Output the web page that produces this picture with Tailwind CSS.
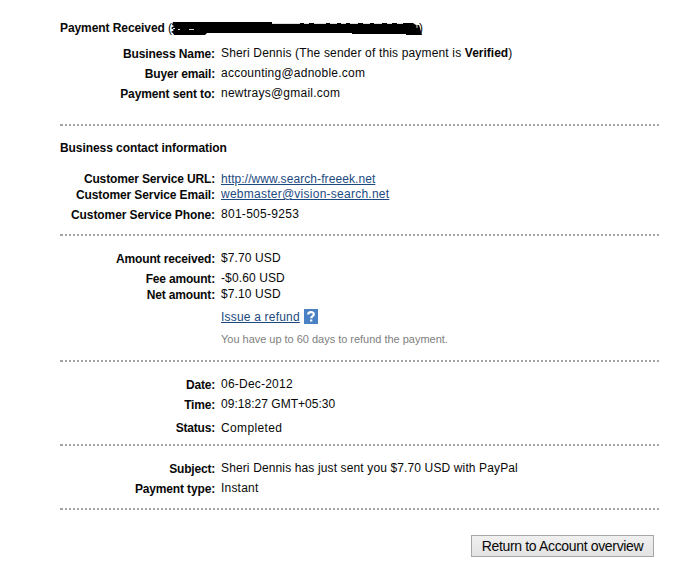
<!DOCTYPE html>
<html lang="en">
<head>
  <meta charset="UTF-8" />
  <meta name="viewport" content="width=device-width, initial-scale=1.0"/>
  <title>Transaction Details</title>
  <script src="https://cdn.jsdelivr.net/npm/@tailwindcss/browser@4"></script>
</head>
<body class="bg-white h-[566px] overflow-hidden font-['Liberation_Sans',Arial,sans-serif] text-[12px] leading-[20px] text-[#080808]">

  <main class="ml-[60px] w-[600px] pt-[18px]">

    <!-- PAYMENT -->
    <section class="h-[106px]">
      <h1 class="relative whitespace-nowrap"><b class="tracking-[-0.08px]">Payment Received</b> (
        <svg class="absolute left-[108px] top-[2px]" width="256" height="17" viewBox="0 0 256 17">
          <path d="M5 2H104V3H245L248 5L251 5L252 8L254 15H238V14H184V13H39L37 15H6L5 13L3 12L6 10L3 8L6 6L4 5Z" fill="#000"/>
          <path d="M5 8.5h2M10 9.5h2M21 9.5h5M104 3.5h28M136 3.5h5M146 3.5h12M162 3.5h7M173 3.5h5M182 3.5h8M195 3.5h7M206 3.5h8M219 3.5h5M229 3.5h6M249 4v4" stroke="#ddd" stroke-width="1" fill="none"/>
        </svg>
        <span class="absolute left-[359px] top-0">)</span>
      </h1>
      <dl class="mt-[5px] grid grid-cols-[155px_1fr] gap-x-[6px]">
        <dt class="-mb-px pt-px text-right font-bold tracking-[-0.09px]">Business Name:</dt>
        <dd class="tracking-[0.16px]">Sheri Dennis (The sender of this payment is <b class="tracking-normal">Verified</b>)</dd>
        <dt class="-mb-px pt-px text-right font-bold tracking-[-0.15px]">Buyer email:</dt>
        <dd class="tracking-[0.24px]">accounting@adnoble.com</dd>
        <dt class="-mb-px pt-px text-right font-bold tracking-[-0.12px]">Payment sent to:</dt>
        <dd class="tracking-[0.24px]">newtrays@gmail.com</dd>
      </dl>
    </section>

    <!-- CONTACT -->
    <hr class="h-[2px] w-[599px] border-0 border-l border-[#a4a4a4] bg-[repeating-linear-gradient(90deg,#a4a4a4_0_2px,#fff_2px_4px)]">
    <section class="h-[108px] pt-[12px]">
      <h2 class="font-bold tracking-[-0.07px]">Business contact information</h2>
      <dl class="mt-[13px] grid grid-cols-[155px_1fr] gap-x-[6px]">
        <dt class="text-right font-bold leading-[16px] tracking-[-0.14px]">Customer Service URL:</dt>
        <dd class="leading-[16px] tracking-[0.08px]"><a href="#" class="text-[#1c4a80] underline">http://www.search-freeek.net</a></dd>
        <dt class="text-right font-bold leading-[16px] tracking-[-0.1px]">Customer Service Email:</dt>
        <dd class="-mt-px leading-[16px] tracking-[0.25px]"><a href="#" class="text-[#1c4a80] underline">webmaster@vision-search.net</a></dd>
        <dt class="-mb-px mt-px pt-px text-right font-bold tracking-[-0.09px]">Customer Service Phone:</dt>
        <dd class="mt-px tracking-[0.28px]">801-505-9253</dd>
      </dl>
    </section>

    <!-- AMOUNT -->
    <hr class="h-[2px] w-[599px] border-0 border-l border-[#a4a4a4] bg-[repeating-linear-gradient(90deg,#a4a4a4_0_2px,#fff_2px_4px)]">
    <section class="h-[124px] pt-[12px]">
      <dl class="grid grid-cols-[155px_1fr] gap-x-[6px]">
        <dt class="-mb-px pt-px text-right font-bold tracking-[-0.15px]">Amount received:</dt>
        <dd class="tracking-[0.12px]">$7.70 USD</dd>
        <dt class="-mb-px mt-[3px] text-right font-bold leading-[16px] tracking-[-0.18px]">Fee amount:</dt>
        <dd class="mt-[2px] leading-[16px] tracking-[0.12px]">-$0.60 USD</dd>
        <dt class="-mb-px pt-px text-right font-bold leading-[16px] tracking-[-0.15px]">Net amount:</dt>
        <dd class="leading-[16px] tracking-[0.12px]">$7.10 USD</dd>
      </dl>
      <div class="ml-[161px] mt-[5px] flex gap-[4px]">
        <a href="#" class="text-[#1c4a80] tracking-[0.2px] underline">Issue a refund</a>
        <svg class="mt-[2px]" width="14" height="15" viewBox="0 0 14 15">
          <rect width="14" height="15" fill="#4a80c4"/>
          <path d="M4.2 5.4C4.2 2.4 9.8 2.3 9.8 5.2C9.8 7.2 7.2 7 7.2 9.2M7.2 10.4V12.4" stroke="#fff" stroke-width="2.2" fill="none"/>
        </svg>
      </div>
      <p class="ml-[161px] mt-[2px] text-[11px] tracking-[-0.02px] text-[#808080]">You have up to 60 days to refund the payment.</p>
    </section>

    <!-- STATUS -->
    <hr class="h-[2px] w-[599px] border-0 border-l border-[#a4a4a4] bg-[repeating-linear-gradient(90deg,#a4a4a4_0_2px,#fff_2px_4px)]">
    <section class="h-[82px] pt-[12px]">
      <dl class="grid grid-cols-[155px_1fr] gap-x-[6px]">
        <dt class="-mb-px pt-px text-right font-bold tracking-[-0.2px]">Date:</dt>
        <dd class="tracking-[0.22px]">06-Dec-2012</dd>
        <dt class="-mb-px pt-px text-right font-bold tracking-[-0.2px]">Time:</dt>
        <dd class="tracking-[0.03px]">09:18:27 GMT+05:30</dd>
        <dt class="mt-[4px] text-right font-bold tracking-[-0.2px]">Status:</dt>
        <dd class="mt-[4px] tracking-[0.35px]">Completed</dd>
      </dl>
    </section>

    <!-- SUBJECT -->
    <hr class="h-[2px] w-[599px] border-0 border-l border-[#a4a4a4] bg-[repeating-linear-gradient(90deg,#a4a4a4_0_2px,#fff_2px_4px)]">
    <section class="h-[62px] pt-[12px]">
      <dl class="grid grid-cols-[155px_1fr] gap-x-[6px]">
        <dt class="-mb-px pt-px text-right font-bold tracking-[-0.2px]">Subject:</dt>
        <dd class="tracking-[0.13px]">Sheri Dennis has just sent you $7.70 USD with PayPal</dd>
        <dt class="-mb-px pt-px text-right font-bold tracking-[-0.15px]">Payment type:</dt>
        <dd class="tracking-[0.2px]">Instant</dd>
      </dl>
    </section>
    <hr class="h-[2px] w-[599px] border-0 border-l border-[#a4a4a4] bg-[repeating-linear-gradient(90deg,#a4a4a4_0_2px,#fff_2px_4px)]">

    <div class="mt-[25px] flex justify-end pr-[6px]">
      <button class="h-[22px] w-[183px] whitespace-nowrap border border-[#a6a6a6] bg-linear-to-b from-[#f0f0f0] to-[#e3e3e3] text-[14px] leading-[21px] tracking-[-0.34px]">Return to Account overview</button>
    </div>
  </main>
</body>
</html>
